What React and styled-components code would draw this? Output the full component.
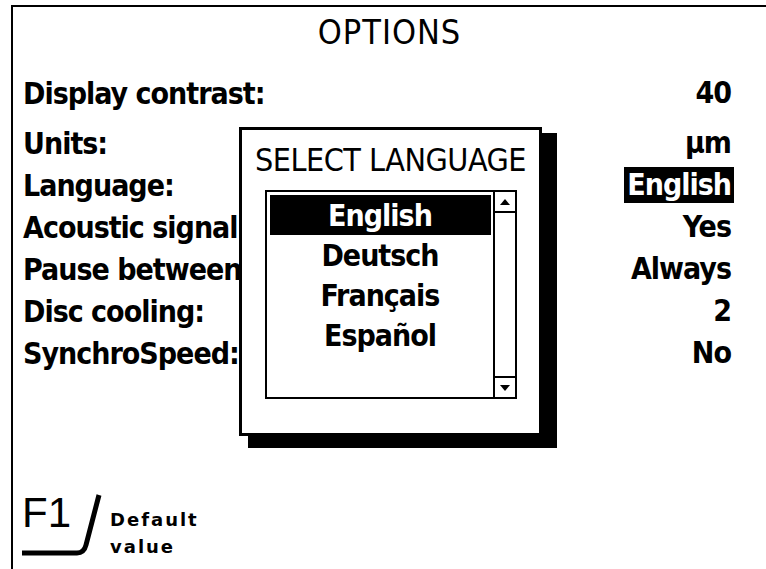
import React from 'react'
import styled, { createGlobalStyle } from 'styled-components'

const GlobalStyle = createGlobalStyle`
  html, body {
    margin: 0;
    padding: 0;
    background: #fff;
  }
  body {
    width: 766px;
    height: 569px;
    overflow: hidden;
    font-family: "DejaVu Sans Condensed", "Liberation Sans Narrow", "Liberation Sans", sans-serif;
    color: #000;
  }
`

const Screen = styled.div`
  position: relative;
  margin: 5px 0 0 11px;
  height: 564px;
  border-top: 2px solid #000;
  border-left: 2px solid #000;
  box-sizing: border-box;
  display: flex;
  flex-direction: column;
`

const Title = styled.h1`
  margin: 0;
  padding-top: 7px;
  text-align: center;
  font-size: 34px;
  font-weight: 400;
  line-height: 36px;
  letter-spacing: 1px;
`

const Options = styled.div`
  display: flex;
  flex-direction: column;
  padding: 22px 35px 0 10px;
`

const Row = styled.div`
  display: flex;
  justify-content: space-between;
  align-items: center;
  height: 42px;
  font-size: 30px;
  font-weight: 700;
  letter-spacing: -1px;
  margin-bottom: ${p => (p.$gap ? '8px' : '0')};
`

const Value = styled.span`
  padding: 0 ${p => (p.$active ? '3px' : '0')};
  margin-right: ${p => (p.$active ? '-3px' : '0')};
  background: ${p => (p.$active ? '#000' : 'transparent')};
  color: ${p => (p.$active ? '#fff' : '#000')};
  line-height: 36px;
`

const Footer = styled.div`
  margin-top: auto;
  display: flex;
  align-items: flex-end;
  padding: 0 0 9px 9px;
`

const KeyBadge = styled.div`
  position: relative;
  width: 88px;
  height: 68px;
  font-family: "Liberation Sans", Arial, sans-serif;
  font-size: 42px;
  line-height: 1;
  svg {
    position: absolute;
    left: 0;
    top: 0;
  }
`

const KeyLabel = styled.span`
  position: absolute;
  left: 0;
  top: 0;
`

const KeyText = styled.div`
  font-family: "DejaVu Sans", sans-serif;
  font-weight: 700;
  font-size: 18px;
  line-height: 27px;
  letter-spacing: 2px;
`

const Dialog = styled.div`
  position: absolute;
  left: 226px;
  top: 120px;
  width: 303px;
  height: 309px;
  box-sizing: border-box;
  background: #fff;
  border: 3px solid #000;
  box-shadow: 12px 9px 0 3px #000;
  display: flex;
  flex-direction: column;
  align-items: center;
`

const DialogTitle = styled.div`
  margin-top: 13px;
  font-size: 32px;
  line-height: 34px;
  font-weight: 400;
  letter-spacing: -0.5px;
`

const ListBox = styled.div`
  margin-top: 13px;
  width: 252px;
  height: 209px;
  box-sizing: border-box;
  border: 2px solid #000;
  display: flex;
`

const Items = styled.div`
  flex: 1;
  padding: 3px 2px 0 3px;
  display: flex;
  flex-direction: column;
`

const Item = styled.div`
  height: 40px;
  display: flex;
  align-items: center;
  justify-content: center;
  font-size: 30px;
  font-weight: 700;
  letter-spacing: -1px;
  background: ${p => (p.$active ? '#000' : 'transparent')};
  color: ${p => (p.$active ? '#fff' : '#000')};
`

const ScrollBar = styled.div`
  width: 20px;
  border-left: 2px solid #000;
  display: flex;
  flex-direction: column;
  justify-content: space-between;
`

const Arrow = styled.div`
  height: 19px;
  display: flex;
  align-items: center;
  justify-content: center;
  border-${p => (p.$down ? 'top' : 'bottom')}: 2px solid #000;
`

const options = [
  ['Display contrast:', '40'],
  ['Units:', 'µm'],
  ['Language:', 'English', true],
  ['Acoustic signal:', 'Yes'],
  ['Pause between', 'Always'],
  ['Disc cooling:', '2'],
  ['SynchroSpeed:', 'No'],
]

const languages = ['English', 'Deutsch', 'Français', 'Español']

function Triangle({ down }) {
  return (
    <svg width="10" height="6" viewBox="0 0 10 6">
      <path d={down ? 'M0 0H10L5 6Z' : 'M5 0L10 6H0Z'} fill="#000" />
    </svg>
  )
}

export default function App() {
  return (
    <>
      <GlobalStyle />
      <Screen>
        <Title>OPTIONS</Title>
        <Options>
          {options.map(([label, value, active], i) => (
            <Row key={label} $gap={i === 0}>
              <span>{label}</span>
              <Value $active={active}>{value}</Value>
            </Row>
          ))}
        </Options>
        <Footer>
          <KeyBadge>
            <KeyLabel>F1</KeyLabel>
            <svg width="88" height="68" viewBox="0 0 88 68">
              <path d="M0 61 H55 Q62 61 64 53 L77 3" fill="none" stroke="#000" strokeWidth="5" />
            </svg>
          </KeyBadge>
          <KeyText>
            Default
            <br />
            value
          </KeyText>
        </Footer>
        <Dialog>
          <DialogTitle>SELECT LANGUAGE</DialogTitle>
          <ListBox>
            <Items>
              {languages.map((l, i) => (
                <Item key={l} $active={i === 0}>{l}</Item>
              ))}
            </Items>
            <ScrollBar>
              <Arrow><Triangle /></Arrow>
              <Arrow $down><Triangle down /></Arrow>
            </ScrollBar>
          </ListBox>
        </Dialog>
      </Screen>
    </>
  )
}
